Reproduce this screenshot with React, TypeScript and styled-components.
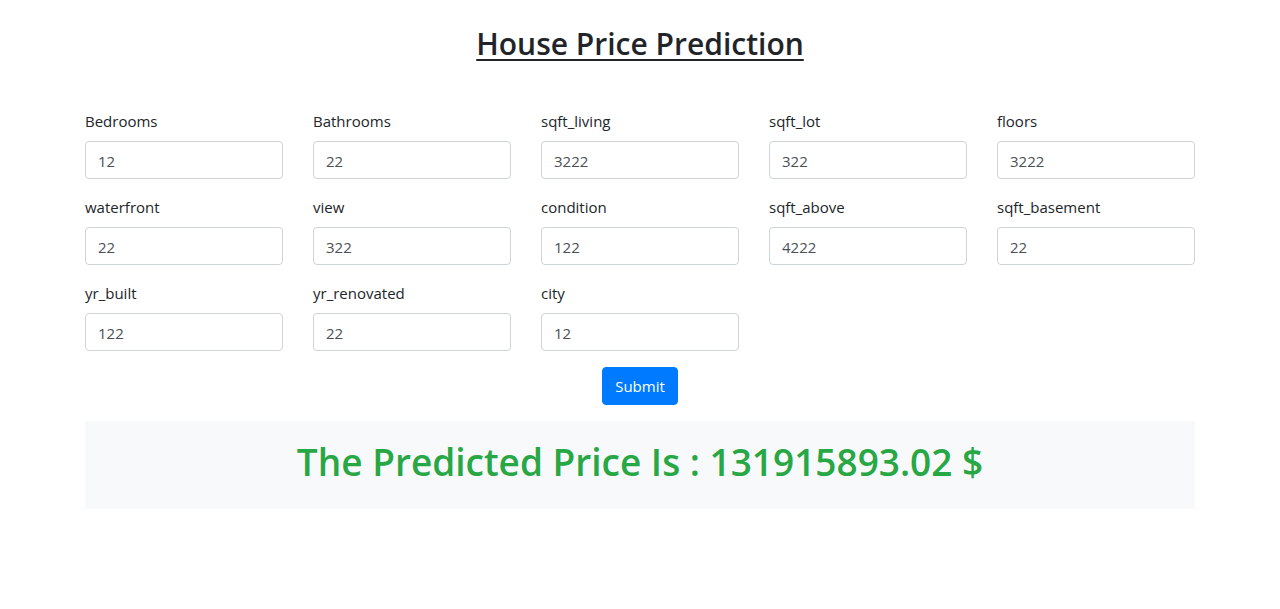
import React from "react";
import styled, { createGlobalStyle } from "styled-components";

const Global = createGlobalStyle`
  * { box-sizing: border-box; }
  body {
    margin: 0;
    font-family: "Open Sans", "Noto Sans", sans-serif;
    font-size: 16px;
    line-height: 1.5;
    color: #212529;
    background: #fff;
  }
`;

const Container = styled.div`
  width: 1140px;
  margin: 0 auto;
  padding: 0 15px;
`;

const Title = styled.h2`
  margin: 25px 0 46px;
  height: 38px;
  text-align: center;
  font-size: 30px;
  font-weight: 600;
  line-height: 38px;
  text-decoration: underline;
  text-underline-offset: 4px;
  text-decoration-thickness: 2px;
`;

const Grid = styled.div`
  display: grid;
  grid-template-columns: repeat(5, 198px);
  column-gap: 30px;
  row-gap: 16px;
`;

const Field = styled.div`
  display: flex;
  flex-direction: column;
`;

const Label = styled.label`
  display: block;
  margin-bottom: 8px;
  font-size: 15px;
  line-height: 24px;
`;

const Input = styled.input`
  width: 198px;
  height: 38px;
  padding: 6px 12px 5px;
  font-family: inherit;
  font-size: 15px;
  color: #495057;
  background: #fff;
  border: 1px solid #ced4da;
  border-radius: 4px;
  outline: none;
`;

const Actions = styled.div`
  display: flex;
  justify-content: center;
  margin-top: 16px;
`;

const Button = styled.button`
  width: 76px;
  height: 38px;
  font-family: inherit;
  font-size: 15px;
  color: #fff;
  background: #007bff;
  border: 1px solid #007bff;
  border-radius: 4px;
  padding: 0;
`;

const Result = styled.div`
  margin-top: 16px;
  height: 88px;
  background: #f8f9fa;
  display: flex;
  align-items: center;
  justify-content: center;
  padding-bottom: 5px;
`;

const ResultText = styled.h1`
  margin: 0;
  font-size: 37px;
  font-weight: 600;
  line-height: 1.2;
  color: #28a745;
`;

const fields: [string, string][] = [
  ["Bedrooms", "12"],
  ["Bathrooms", "22"],
  ["sqft_living", "3222"],
  ["sqft_lot", "322"],
  ["floors", "3222"],
  ["waterfront", "22"],
  ["view", "322"],
  ["condition", "122"],
  ["sqft_above", "4222"],
  ["sqft_basement", "22"],
  ["yr_built", "122"],
  ["yr_renovated", "22"],
  ["city", "12"],
];

export default function App() {
  return (
    <>
      <Global />
      <Container>
        <Title>House Price Prediction</Title>
        <form onSubmit={(e) => e.preventDefault()}>
          <Grid>
            {fields.map(([name, value]) => (
              <Field key={name}>
                <Label htmlFor={name}>{name}</Label>
                <Input id={name} defaultValue={value} />
              </Field>
            ))}
          </Grid>
          <Actions>
            <Button type="submit">Submit</Button>
          </Actions>
        </form>
        <Result>
          <ResultText>The Predicted Price Is : 131915893.02 $</ResultText>
        </Result>
      </Container>
    </>
  );
}
